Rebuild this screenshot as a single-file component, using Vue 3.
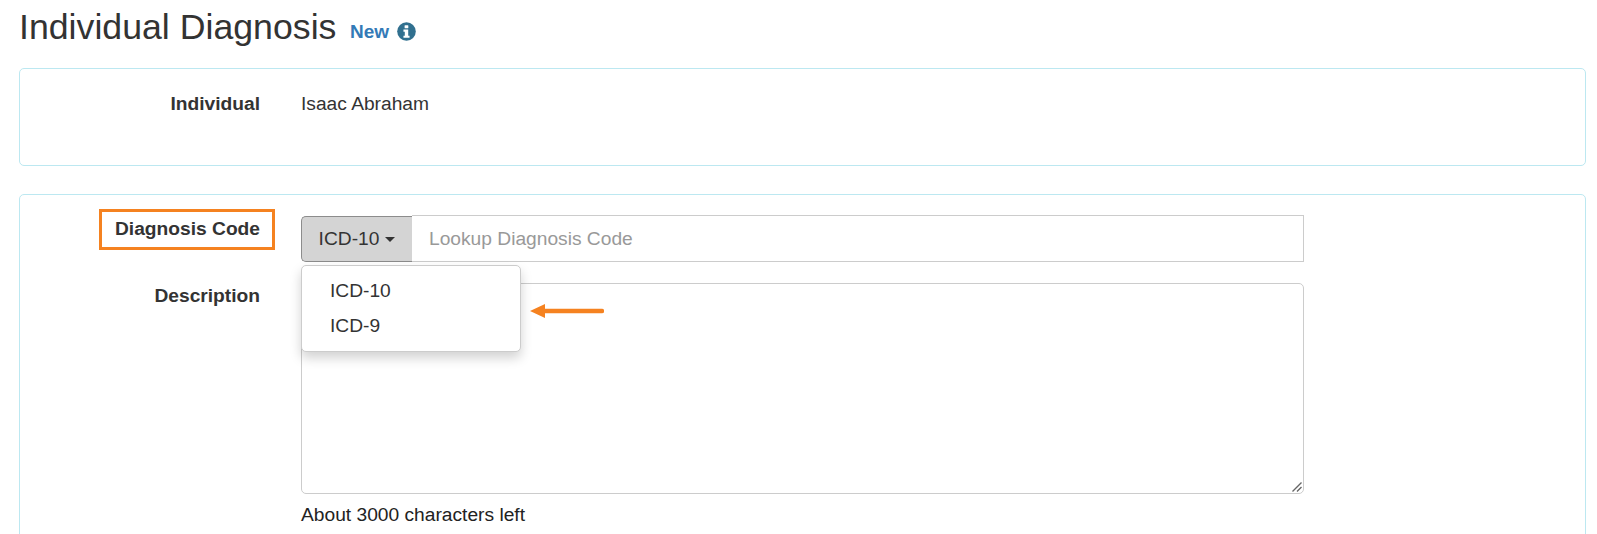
<script setup>
const options = ['ICD-10', 'ICD-9']
</script>

<template>
  <div class="page">
    <header class="title-row">
      <h1>Individual Diagnosis</h1>
      <span class="status">New</span>
      <svg class="info" viewBox="0 0 20 20" aria-hidden="true">
        <circle cx="10" cy="10" r="9.8" fill="#31708f" />
        <rect x="8" y="3.4" width="3.9" height="3.2" rx="0.6" fill="#fff" />
        <path d="M6.8 8h5v6.4h1.4v2.2H6.8v-2.2h1.4v-4.2H6.8z" fill="#fff" />
      </svg>
    </header>

    <section class="panel first">
      <div class="row">
        <div class="label">Individual</div>
        <div class="value">Isaac Abraham</div>
      </div>
    </section>

    <section class="panel second">
      <div class="row code-row">
        <div class="label code-label">Diagnosis Code<span class="highlight"></span></div>
        <div class="control">
          <div class="input-group">
            <button class="addon" type="button">ICD-10<span class="caret"></span></button>
            <div class="lookup">Lookup Diagnosis Code</div>
          </div>
          <ul class="menu">
            <li v-for="option in options" :key="option">{{ option }}</li>
          </ul>
          <svg class="arrow" viewBox="0 0 74 14" aria-hidden="true">
            <path d="M14 7H72" stroke="#f58220" stroke-width="4.4" stroke-linecap="round" />
            <path d="M0 7L15 0V14Z" fill="#f58220" />
          </svg>
        </div>
      </div>
      <div class="row desc-row">
        <div class="label desc-label">Description</div>
        <div class="control">
          <div class="textarea">
            <svg class="grip" viewBox="0 0 10 10" aria-hidden="true">
              <path d="M0.5 9.5L9.5 0.5M5 9.5L9.5 5" stroke="#666" stroke-width="1.4" />
            </svg>
          </div>
          <div class="counter">About 3000 characters left</div>
        </div>
      </div>
    </section>
  </div>
</template>

<style>
html, body { margin: 0; background: #fff; overflow: hidden; }
</style>

<style scoped>
.page {
  height: 534px;
  overflow: hidden;
  padding: 0 11px 0 19px;
  box-sizing: border-box;
  font-family: "Liberation Sans", Arial, sans-serif;
  font-size: 19.2px;
  color: #333;
}
.title-row {
  height: 68px;
  display: flex;
  align-items: baseline;
  padding-top: 6px;
  box-sizing: border-box;
}
h1 {
  margin: 0;
  font-size: 35.7px;
  line-height: 42px;
  font-weight: 400;
}
.status {
  margin-left: 13.5px;
  font-size: 19px;
  font-weight: 700;
  color: #337ab7;
  position: relative;
  top: -1px;
}
.info {
  width: 19px;
  height: 19px;
  margin-left: 8px;
  align-self: center;
  position: relative;
  top: -6px;
}
.panel {
  border: 1px solid #bce8f1;
  border-radius: 5px;
  box-sizing: border-box;
}
.first { height: 98px; margin-bottom: 28px; padding-top: 23px; }
.second { height: 380px; padding-top: 20px; }
.row { display: flex; }
.label {
  width: 240px;
  flex: none;
  text-align: right;
  font-weight: 700;
  line-height: 24px;
  position: relative;
}
.value { margin-left: 41px; line-height: 24px; }
.code-row { height: 68px; }
.code-label { top: 2px; }
.desc-label { top: 1px; }
.highlight {
  position: absolute;
  left: 79px;
  top: -8px;
  width: 176px;
  height: 41px;
  border: 3px solid #f58220;
  box-sizing: border-box;
}
.control { margin-left: 41px; width: 1003px; flex: none; position: relative; }
.input-group {
  display: flex;
  height: 47px;
  box-sizing: border-box;
}
.addon {
  width: 111px;
  height: 46px;
  margin-top: 1px;
  flex: none;
  font: inherit;
  color: #333;
  background: #d4d4d4;
  border: 1px solid #8c8c8c;
  border-right: 0;
  border-radius: 5px 0 0 5px;
  padding: 0;
  display: flex;
  align-items: center;
  justify-content: center;
}
.caret {
  width: 0;
  height: 0;
  margin-left: 6px;
  border-top: 5px solid #333;
  border-left: 5px solid transparent;
  border-right: 5px solid transparent;
}
.lookup {
  flex: 1;
  border: 1px solid #ccc;
  border-left: 0;
  padding-left: 17px;
  line-height: 45px;
  color: #999;
}
.menu {
  position: absolute;
  z-index: 2;
  left: 0;
  top: 50px;
  width: 220px;
  height: 87px;
  box-sizing: border-box;
  margin: 0;
  padding: 7px 0;
  list-style: none;
  background: #fff;
  border: 1px solid #ccc;
  border-radius: 5px;
  box-shadow: 0 6px 12px rgba(0, 0, 0, 0.18);
}
.menu li { padding-left: 28px; line-height: 35px; }
.arrow {
  position: absolute;
  z-index: 2;
  left: 229px;
  top: 89px;
  width: 74px;
  height: 14px;
}
.textarea {
  height: 211px;
  box-sizing: border-box;
  border: 1px solid #ccc;
  border-radius: 5px;
  position: relative;
}
.grip {
  position: absolute;
  right: 1px;
  bottom: 1px;
  width: 10px;
  height: 10px;
}
.counter { margin-top: 9px; line-height: 24px; color: #222; }
</style>
